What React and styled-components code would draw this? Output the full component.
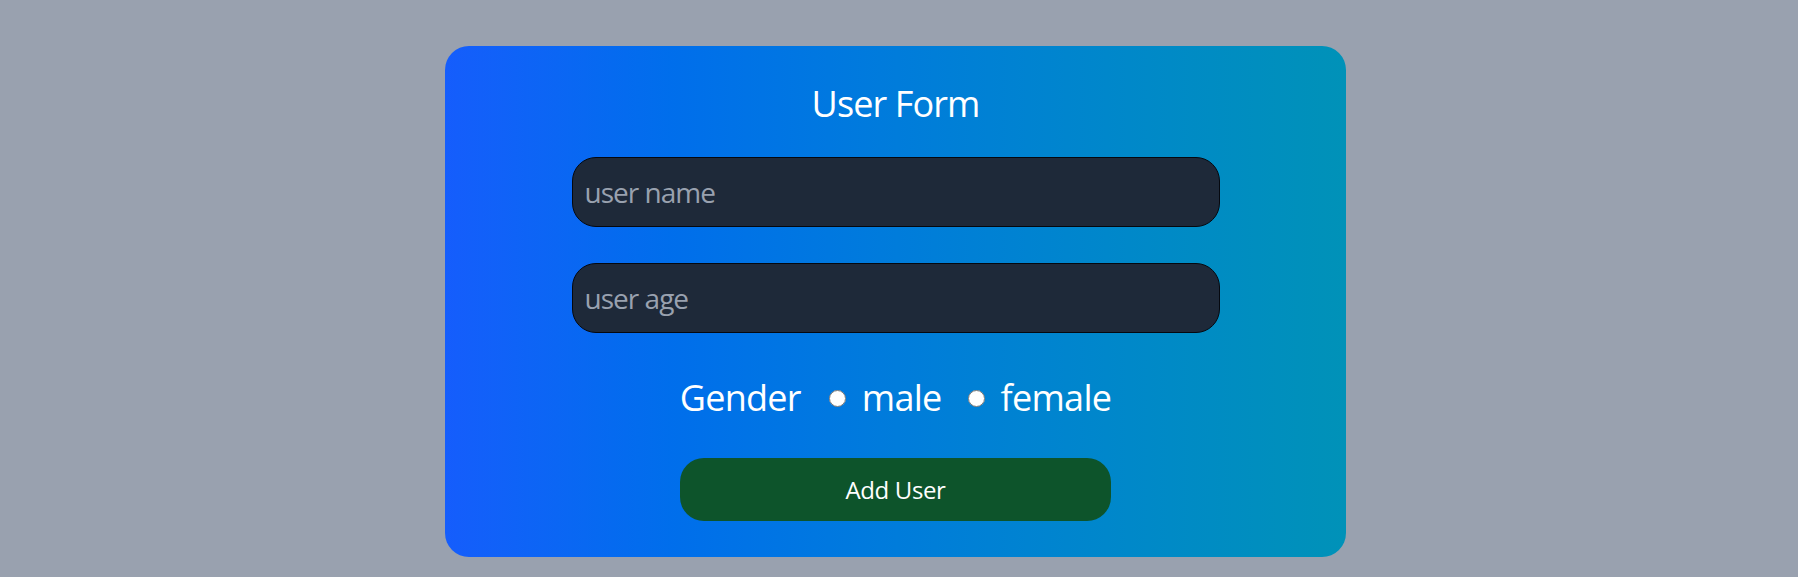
import React, { useState } from "react";
import styled, { createGlobalStyle } from "styled-components";

const GlobalStyle = createGlobalStyle`
  html, body {
    margin: 0;
    padding: 0;
    background: #99a1af;
    font-family: "Open Sans", "Noto Sans", Arial, sans-serif;
  }
  * { box-sizing: border-box; }
`;

const Page = styled.div`
  display: flex;
  justify-content: center;
  padding: 46px 7px 20px 0;
  min-height: 577px;
`;

const Card = styled.form`
  width: 901px;
  height: 511px;
  padding: 38px 0 36px;
  border-radius: 24px;
  background: linear-gradient(to right in oklab, #155dfc, #0092b8);
  display: flex;
  flex-direction: column;
  align-items: center;
  color: #ffffff;
`;

const Title = styled.h1`
  margin: 0 0 33px;
  font-size: 36px;
  line-height: 40px;
  font-weight: 400;
  letter-spacing: -0.025em;
`;

const TextInput = styled.input`
  display: block;
  width: 648px;
  height: 70px;
  margin: 0 0 ${(p) => p.$gap}px;
  padding: 0 12px;
  border: 1px solid #05080f;
  border-radius: 24px;
  background: #1e2939;
  color: #ffffff;
  font-family: inherit;
  font-size: 28px;
  letter-spacing: -0.035em;
  outline: none;
  &::placeholder {
    color: #99a1af;
  }
`;

const GenderRow = styled.div`
  display: flex;
  align-items: center;
  font-size: 36px;
  line-height: 40px;
  letter-spacing: -0.02em;
  margin-bottom: 40px;
`;

const GenderLabel = styled.span`
  margin-right: 28px;
`;

const Option = styled.label`
  display: flex;
  align-items: center;
  margin-right: ${(p) => (p.$last ? 0 : 26)}px;
  cursor: pointer;
`;

const Radio = styled.input`
  width: 17px;
  height: 17px;
  margin: 0 16px 0 0;
`;

const Button = styled.button`
  width: 431px;
  height: 63px;
  border: none;
  border-radius: 24px;
  background: #0d542b;
  color: #ffffff;
  font-family: inherit;
  font-size: 24px;
  letter-spacing: -0.015em;
  cursor: pointer;
`;

export default function App() {
  const [gender, setGender] = useState("");
  return (
    <>
      <GlobalStyle />
      <Page>
        <Card onSubmit={(e) => e.preventDefault()}>
          <Title>User Form</Title>
          <TextInput type="text" placeholder="user name" $gap={36} />
          <TextInput type="text" placeholder="user age" $gap={45} />
          <GenderRow>
            <GenderLabel>Gender</GenderLabel>
            <Option>
              <Radio
                type="radio"
                name="gender"
                value="male"
                checked={gender === "male"}
                onChange={() => setGender("male")}
              />
              male
            </Option>
            <Option $last>
              <Radio
                type="radio"
                name="gender"
                value="female"
                checked={gender === "female"}
                onChange={() => setGender("female")}
              />
              female
            </Option>
          </GenderRow>
          <Button type="submit">Add User</Button>
        </Card>
      </Page>
    </>
  );
}
